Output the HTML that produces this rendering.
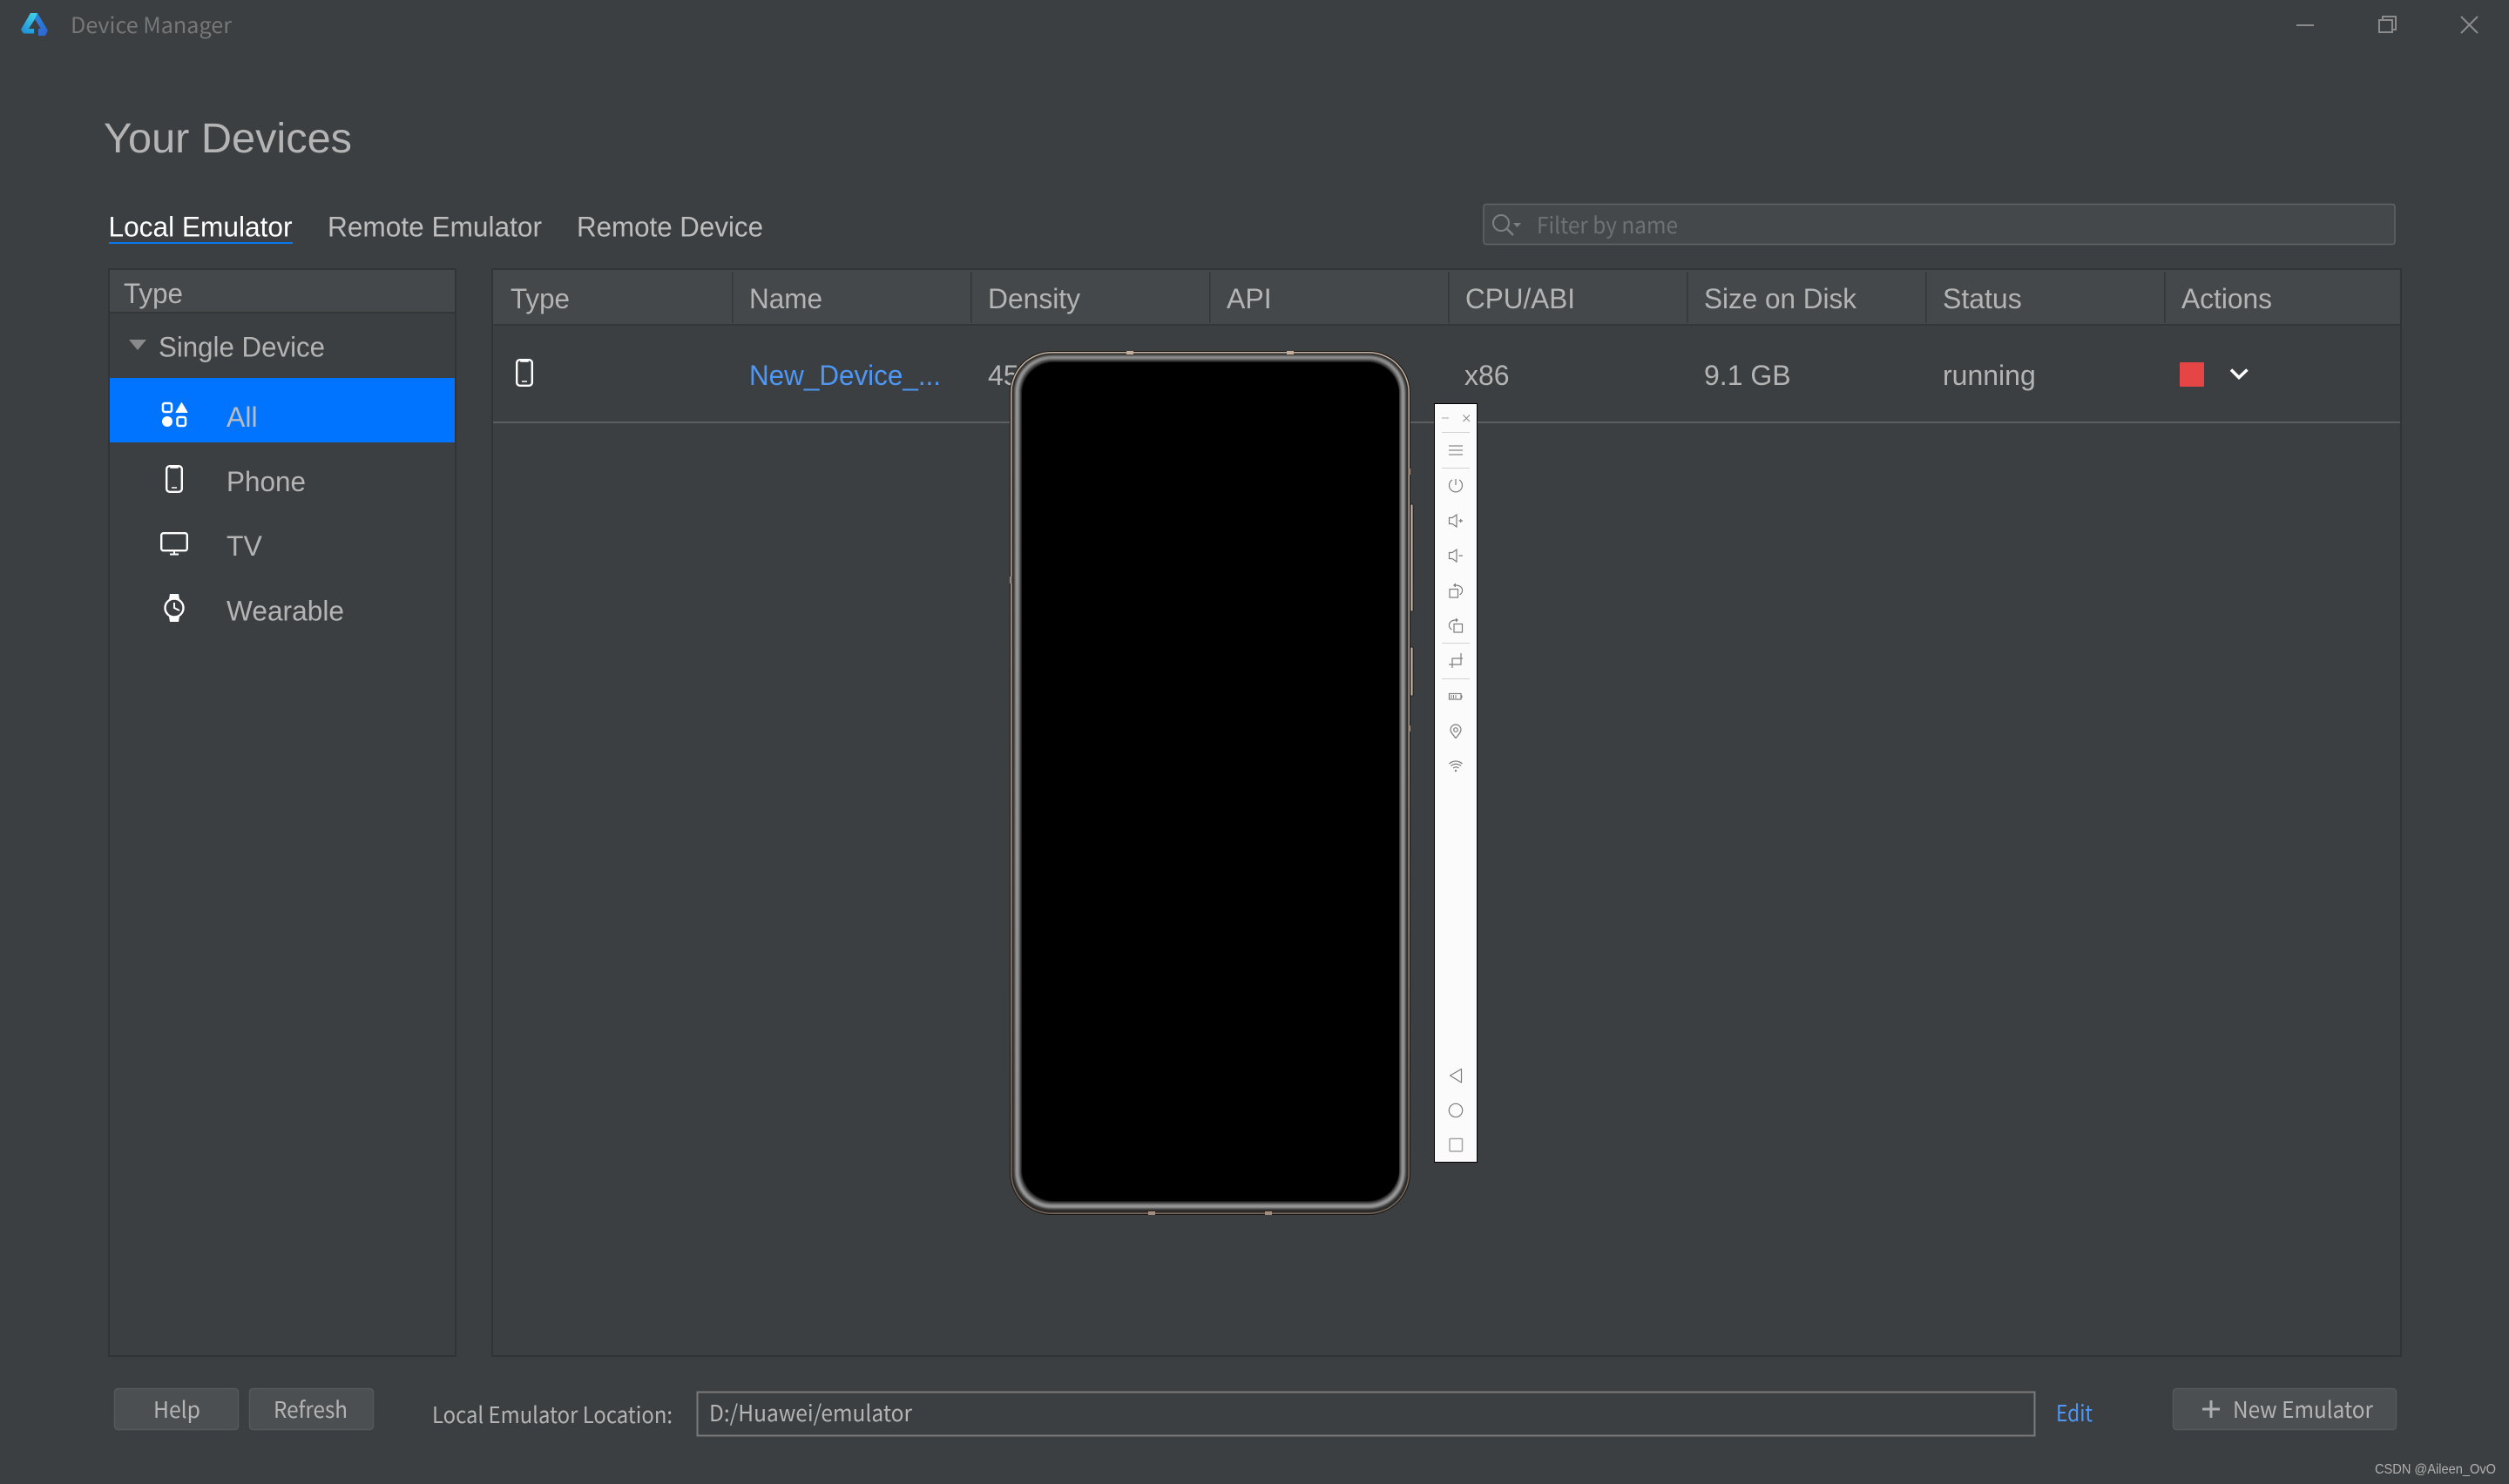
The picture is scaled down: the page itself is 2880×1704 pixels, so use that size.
<!DOCTYPE html>
<html><head><meta charset="utf-8"><title>Device Manager</title>
<style>
html,body{margin:0;padding:0;background:#3c3f41;width:2880px;height:1704px;overflow:hidden}
svg{display:block;position:absolute;left:0;top:0}
text{font-family:"Liberation Sans",Arial,sans-serif;font-size:32px;fill:#b4b4b4}
.n{font-family:"Noto Sans CJK SC","Liberation Sans",sans-serif;font-size:26px;fill:#b4b4b4}
.w{fill:none;stroke:#fff}
.t{fill:none;stroke:#7c7c7c;stroke-width:1.2}
.sep{stroke:#d2d2d2;stroke-width:1}
</style></head><body>
<svg width="2880" height="1704" viewBox="0 0 2880 1704" xmlns="http://www.w3.org/2000/svg">
<defs>
<linearGradient id="lg1" x1="0.7" y1="0" x2="0.2" y2="1"><stop offset="0" stop-color="#3fd0e6"/><stop offset="1" stop-color="#1f8fd8"/></linearGradient>
<linearGradient id="lg2" x1="0" y1="0" x2="1" y2="1"><stop offset="0" stop-color="#2b8be0"/><stop offset="1" stop-color="#2f5fd0"/></linearGradient>
<linearGradient id="tan" x1="0" y1="0" x2="0" y2="1"><stop offset="0" stop-color="#c4b3a3"/><stop offset=".6" stop-color="#a99686"/><stop offset="1" stop-color="#75655a"/></linearGradient>
<filter id="soft" x="-5%" y="-5%" width="110%" height="110%"><feGaussianBlur stdDeviation="1"/></filter>
</defs>
<rect width="2880" height="1704" fill="#3c3f41"/>

<!-- Title bar -->
<path d="M35 15L24 34l3 4.500h12V33h-6l7-11 3-7z" fill="url(#lg1)"/>
<path d="M43 15l-3 7 7 11h-3v8h8l3-6z" fill="url(#lg2)"/>
<text class="n" x="81" y="38" style="fill:#777;font-size:25px" textLength="185" lengthAdjust="spacingAndGlyphs">Device Manager</text>
<path d="M2636 29h20" stroke="#8c8c8c" stroke-width="2"/>
<path d="M2731 23h15v14h-15zM2735 23v-4h15v15h-4" fill="none" stroke="#8c8c8c" stroke-width="2"/>
<path d="M2825 19l19 19M2844 19l-19 19" stroke="#8c8c8c" stroke-width="2"/>

<text x="119" y="175" style="font-size:48px;fill:#b4b4b4" textLength="285" lengthAdjust="spacingAndGlyphs">Your Devices</text>

<!-- Tabs -->
<text x="124.500" y="271.500" style="fill:#fff" textLength="211" lengthAdjust="spacingAndGlyphs">Local Emulator</text>
<rect x="125" y="278" width="211" height="2" fill="#0a78f0"/>
<text x="376" y="271.500" style="fill:#bdbdbd" textLength="246" lengthAdjust="spacingAndGlyphs">Remote Emulator</text>
<text x="662" y="271.500" style="fill:#bdbdbd" textLength="214" lengthAdjust="spacingAndGlyphs">Remote Device</text>

<!-- Filter -->
<rect x="1703" y="234.500" width="1046" height="46" rx="3" fill="#45484a" stroke="#626465" stroke-width="1.500"/>
<circle cx="1723" cy="256" r="9" fill="none" stroke="#7c8082" stroke-width="2"/>
<path d="M1730 263l7 7" stroke="#7c8082" stroke-width="2.500"/>
<path d="M1737 256h9l-4.500 5z" fill="#7c8082"/>
<text class="n" x="1764" y="268" style="fill:#6e7072" textLength="162" lengthAdjust="spacingAndGlyphs">Filter by name</text>

<!-- Left panel -->
<rect x="125" y="309" width="398" height="1248" fill="#3c3f41" stroke="#313335" stroke-width="2"/>
<rect x="126" y="310" width="396" height="48" fill="#45484a"/>
<rect x="126" y="358" width="396" height="2" fill="#343638"/>
<text x="142" y="348" textLength="68" lengthAdjust="spacingAndGlyphs">Type</text>
<path d="M148 390h20l-10 12z" fill="#8a8a8a"/>
<text x="182" y="409.500" textLength="191" lengthAdjust="spacingAndGlyphs">Single Device</text>
<rect x="126" y="434" width="396" height="74" fill="#0073ff"/>
<text x="260" y="490" style="fill:#b9bcc0">All</text>
<text x="260" y="564" textLength="91" lengthAdjust="spacingAndGlyphs">Phone</text>
<text x="260" y="638">TV</text>
<text x="260" y="712.500" textLength="135" lengthAdjust="spacingAndGlyphs">Wearable</text>

<!-- All icon -->
<rect x="187" y="463" width="10" height="10" rx="2" class="w" stroke-width="2.500"/>
<path d="M208.500 462.500l6.500 11h-13z" fill="#fff" stroke="#fff" stroke-linejoin="round"/>
<circle cx="192" cy="484" r="6" fill="#fff"/>
<rect x="203.500" y="479" width="9.500" height="10" rx="2" class="w" stroke-width="2.500"/>
<!-- Phone icon -->
<rect x="191.200" y="535.200" width="17.600" height="29.600" rx="3.500" class="w" stroke-width="2.400"/>
<path d="M196 535.500h8v1.500h-8zM197 560h6" stroke="#fff" stroke-width="1.500" fill="#fff"/>
<!-- TV icon -->
<rect x="185.200" y="612.200" width="29.600" height="20" rx="2.500" class="w" stroke-width="2.400"/>
<path d="M200 633v3M195 636.500h10" stroke="#fff" stroke-width="2"/>
<!-- Watch icon -->
<path d="M194 688l1-6h10l1 6zM194 708l1 6h10l1-6z" fill="#fff"/>
<circle cx="200" cy="698" r="10.500" class="w" stroke-width="2.400"/>
<path d="M200 692v6l6 3" class="w" stroke-width="2"/>

<!-- Main table -->
<rect x="565" y="309" width="2191" height="1248" fill="#3c3f41" stroke="#313335" stroke-width="2"/>
<rect x="566" y="310" width="2189" height="62" fill="#45484a"/>
<rect x="566" y="372" width="2189" height="2" fill="#343638"/>
<g fill="#343638">
<rect x="840" y="312" width="1.500" height="59"/><rect x="1114" y="312" width="1.500" height="59"/><rect x="1388" y="312" width="1.500" height="59"/><rect x="1662" y="312" width="1.500" height="59"/><rect x="1936" y="312" width="1.500" height="59"/><rect x="2210" y="312" width="1.500" height="59"/><rect x="2484" y="312" width="1.500" height="59"/>
</g>
<text x="586" y="354" textLength="68" lengthAdjust="spacingAndGlyphs">Type</text>
<text x="860" y="354" textLength="84" lengthAdjust="spacingAndGlyphs">Name</text>
<text x="1134" y="354" textLength="106" lengthAdjust="spacingAndGlyphs">Density</text>
<text x="1408" y="354">API</text>
<text x="1682" y="354" textLength="126" lengthAdjust="spacingAndGlyphs">CPU/ABI</text>
<text x="1956" y="354" textLength="175" lengthAdjust="spacingAndGlyphs">Size on Disk</text>
<text x="2230" y="354">Status</text>
<text x="2504" y="354" textLength="104" lengthAdjust="spacingAndGlyphs">Actions</text>

<rect x="566" y="484" width="2189" height="2" fill="#5c5e60"/>
<rect x="593.200" y="413.200" width="17.600" height="29.600" rx="3.500" class="w" stroke-width="2.400"/>
<path d="M598 413.500h8v1.500h-8zM599 438h6" stroke="#fff" stroke-width="1.500" fill="#fff"/>
<text x="860" y="442" style="fill:#4e97f5" textLength="220" lengthAdjust="spacingAndGlyphs">New_Device_...</text>
<text x="1134" y="442">450</text>
<text x="1681" y="442">x86</text>
<text x="1956" y="442">9.1 GB</text>
<text x="2230" y="442">running</text>
<rect x="2502" y="416" width="28" height="28" rx="1" fill="#e64545"/>
<path d="M2561 424.500l9 9 9.500-9" fill="none" stroke="#fff" stroke-width="3.500"/>

<!-- Phone -->
<rect x="1619" y="579" width="3" height="123" rx="1" fill="#c9b8a8" stroke="#111" stroke-width=".8"/>
<rect x="1619" y="743" width="3" height="56" rx="1" fill="#c9b8a8" stroke="#111" stroke-width=".8"/>
<rect x="1159" y="403" width="460" height="992" rx="48" fill="#1a1613"/>
<rect x="1160" y="404" width="458" height="990" rx="47" fill="url(#tan)"/>
<rect x="1161.500" y="405.500" width="455" height="987" rx="45.500" fill="#2a2928"/>
<g filter="url(#soft)">
<rect x="1164" y="407.500" width="450" height="981" rx="43" fill="#606060"/>
<rect x="1166" y="409.500" width="446" height="977" rx="41" fill="#a2a2a2"/>
<rect x="1168.500" y="411" width="441" height="973" rx="39" fill="#767676"/>
<rect x="1170.500" y="413" width="437" height="969" rx="37" fill="#343434"/>
<rect x="1172" y="415" width="435" height="965" rx="38" fill="#000"/>
</g>
<rect x="1173" y="416" width="433" height="963" rx="36" fill="#000"/>
<g fill="#c7ae9c">
<rect x="1293" y="403" width="8" height="4"/><rect x="1477" y="403" width="8" height="4"/>
<rect x="1159" y="662" width="2.500" height="8" fill="#9c8676"/><rect x="1617" y="538" width="2" height="7" fill="#9c8676"/><rect x="1617" y="833" width="2" height="7" fill="#9c8676"/>
</g>
<g fill="#a58e7e"><rect x="1318" y="1391" width="8" height="4"/><rect x="1452" y="1391" width="8" height="4"/></g>

<!-- Emulator toolbar -->
<rect x="1646.500" y="463.500" width="49" height="871" fill="#fbfbfb" stroke="#000" stroke-width="1"/>
<path d="M1655 480h8" stroke="#c4c4c4" stroke-width="1.500"/>
<path d="M1679.500 476.500l7.500 7.500M1687 476.500l-7.500 7.500" stroke="#8a8a8a" stroke-width="1"/>
<path class="sep" d="M1655 496.500h32M1655 537.500h32M1655 738.500h32M1655 779.500h32"/>
<path d="M1663 512h16M1663 517h16M1663 522h16" stroke="#8a8a8a" stroke-width="1.200"/>
<path class="t" d="M1667 551a7.500 7.500 0 1 0 8 0M1671 550v7"/>
<path class="t" d="M1663.500 594.500h3.500l5-3.500v14l-5-3.500h-3.500zM1674.500 598h4.500M1676.700 596v4"/>
<path class="t" d="M1663.500 634.500h3.500l5-3.500v14l-5-3.500h-3.500zM1674.500 638h4.500"/>
<rect x="1664" y="676.500" width="9.500" height="9.500" class="t" stroke-width="1.300"/>
<path class="t" d="M1671 672c5 0 8 3 7.500 6.500 0 2-1.500 3.500-3 4.500"/><path d="M1671 669.500v5l-3-2.500z" fill="#7c7c7c"/>
<rect x="1669" y="716.500" width="9.500" height="9.500" class="t" stroke-width="1.300"/>
<path class="t" d="M1671 712c-5 0-8 3-7.500 6.500 0 2 1.500 3.500 3 4.500"/><path d="M1671 709.500v5l3-2.500z" fill="#7c7c7c"/>
<path class="t" d="M1663 763h14v-11M1667 767v-11h12M1677 752v-2"/>
<rect x="1663.500" y="796.500" width="13.500" height="6.500" class="t"/>
<path d="M1678 798.500v3M1666 798v4M1668.500 798v4M1671 798v4" stroke="#7c7c7c" stroke-width="1"/>
<path class="t" d="M1671 847.500c-3-3.500-6-7-6-9.500a6 6 0 0 1 12 0c0 2.500-3 6-6 9.500z"/><circle cx="1671" cy="838" r="2.300" class="t"/>
<path class="t" d="M1663.500 877c4.500-4 10.500-4 15 0M1665.500 879.500c3.500-3 8-3 11.500 0M1668 882c2-1.500 4.500-1.500 6.500 0"/><circle cx="1671" cy="885" r="1.200" fill="#7c7c7c"/>
<path class="t" d="M1664.500 1235l13-7.500v15.500z" stroke-linejoin="round"/>
<circle cx="1671" cy="1275" r="7.700" class="t"/>
<rect x="1664" y="1307.500" width="14.500" height="14.500" rx="1" fill="none" stroke="#a5a5a5" stroke-width="1.500"/>

<!-- Footer -->
<rect x="131.500" y="1594.500" width="142" height="47" rx="4" fill="#4c4f51" stroke="#565859" stroke-width="1.500"/>
<rect x="286.500" y="1594.500" width="142" height="47" rx="4" fill="#4c4f51" stroke="#565859" stroke-width="1.500"/>
<text class="n" x="176" y="1628" textLength="54" lengthAdjust="spacingAndGlyphs">Help</text>
<text class="n" x="314" y="1628" textLength="85" lengthAdjust="spacingAndGlyphs">Refresh</text>
<text class="n" x="496" y="1634" textLength="276" lengthAdjust="spacingAndGlyphs">Local Emulator Location:</text>
<rect x="800.500" y="1598.500" width="1535" height="50" fill="#3c3f41" stroke="#7a7a7a" stroke-width="2"/>
<text class="n" x="814" y="1632" textLength="233" lengthAdjust="spacingAndGlyphs">D:/Huawei/emulator</text>
<text class="n" x="2360" y="1632" style="fill:#4e97f5" textLength="42" lengthAdjust="spacingAndGlyphs">Edit</text>
<rect x="2494.500" y="1594.500" width="256" height="47" rx="4" fill="#4c4f51" stroke="#565859" stroke-width="1.500"/>
<path d="M2538 1608v20M2528 1618h20" stroke="#adadad" stroke-width="3"/>
<text class="n" x="2563" y="1628" textLength="161" lengthAdjust="spacingAndGlyphs">New Emulator</text>
<text x="2726" y="1692" style="font-size:16px;fill:#b0b0b0" textLength="139" lengthAdjust="spacingAndGlyphs">CSDN @Aileen_OvO</text>
</svg>
</body></html>
